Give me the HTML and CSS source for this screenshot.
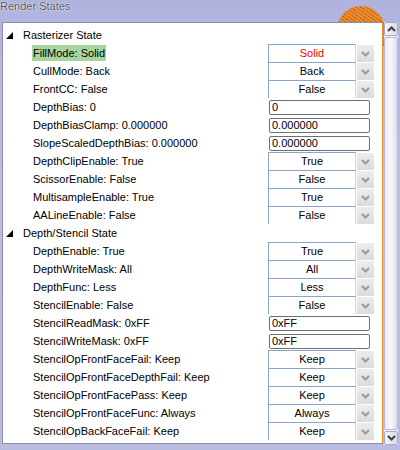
FILE: index.html
```html
<!DOCTYPE html>
<html>
<head>
<meta charset="utf-8">
<link rel="stylesheet" href="styles.css">
</head>
<body>
<div class="desk">
  <div class="blob"></div>
  <div class="title">Render States</div>
  <div class="window">
    <div class="panel">
      <div class="row section"><svg class="tri" width="8" height="8" viewBox="0 0 8 8"><polygon points="7,0 7,7 0,7" fill="#000"/></svg><span>Rasterizer State</span></div>
      <div class="row"><span class="label"><span class="sel">FillMode: Solid</span></span><div class="combo"><div class="val red">Solid</div><div class="btn"><svg width="9" height="6" viewBox="0 0 9 6"><polyline points="1,1 4.5,4.5 8,1" fill="none" stroke="#9a9a9a" stroke-width="2"/></svg></div></div></div>
      <div class="row"><span class="label">CullMode: Back</span><div class="combo"><div class="val">Back</div><div class="btn"><svg width="9" height="6" viewBox="0 0 9 6"><polyline points="1,1 4.5,4.5 8,1" fill="none" stroke="#9a9a9a" stroke-width="2"/></svg></div></div></div>
      <div class="row"><span class="label">FrontCC: False</span><div class="combo"><div class="val">False</div><div class="btn"><svg width="9" height="6" viewBox="0 0 9 6"><polyline points="1,1 4.5,4.5 8,1" fill="none" stroke="#9a9a9a" stroke-width="2"/></svg></div></div></div>
      <div class="row"><span class="label">DepthBias: 0</span><div class="input">0</div></div>
      <div class="row"><span class="label">DepthBiasClamp: 0.000000</span><div class="input">0.000000</div></div>
      <div class="row"><span class="label">SlopeScaledDepthBias: 0.000000</span><div class="input">0.000000</div></div>
      <div class="row"><span class="label">DepthClipEnable: True</span><div class="combo"><div class="val">True</div><div class="btn"><svg width="9" height="6" viewBox="0 0 9 6"><polyline points="1,1 4.5,4.5 8,1" fill="none" stroke="#9a9a9a" stroke-width="2"/></svg></div></div></div>
      <div class="row"><span class="label">ScissorEnable: False</span><div class="combo"><div class="val">False</div><div class="btn"><svg width="9" height="6" viewBox="0 0 9 6"><polyline points="1,1 4.5,4.5 8,1" fill="none" stroke="#9a9a9a" stroke-width="2"/></svg></div></div></div>
      <div class="row"><span class="label">MultisampleEnable: True</span><div class="combo"><div class="val">True</div><div class="btn"><svg width="9" height="6" viewBox="0 0 9 6"><polyline points="1,1 4.5,4.5 8,1" fill="none" stroke="#9a9a9a" stroke-width="2"/></svg></div></div></div>
      <div class="row"><span class="label">AALineEnable: False</span><div class="combo"><div class="val">False</div><div class="btn"><svg width="9" height="6" viewBox="0 0 9 6"><polyline points="1,1 4.5,4.5 8,1" fill="none" stroke="#9a9a9a" stroke-width="2"/></svg></div></div></div>
      <div class="row section"><svg class="tri" width="8" height="8" viewBox="0 0 8 8"><polygon points="7,0 7,7 0,7" fill="#000"/></svg><span>Depth/Stencil State</span></div>
      <div class="row"><span class="label">DepthEnable: True</span><div class="combo"><div class="val">True</div><div class="btn"><svg width="9" height="6" viewBox="0 0 9 6"><polyline points="1,1 4.5,4.5 8,1" fill="none" stroke="#9a9a9a" stroke-width="2"/></svg></div></div></div>
      <div class="row"><span class="label">DepthWriteMask: All</span><div class="combo"><div class="val">All</div><div class="btn"><svg width="9" height="6" viewBox="0 0 9 6"><polyline points="1,1 4.5,4.5 8,1" fill="none" stroke="#9a9a9a" stroke-width="2"/></svg></div></div></div>
      <div class="row"><span class="label">DepthFunc: Less</span><div class="combo"><div class="val">Less</div><div class="btn"><svg width="9" height="6" viewBox="0 0 9 6"><polyline points="1,1 4.5,4.5 8,1" fill="none" stroke="#9a9a9a" stroke-width="2"/></svg></div></div></div>
      <div class="row"><span class="label">StencilEnable: False</span><div class="combo"><div class="val">False</div><div class="btn"><svg width="9" height="6" viewBox="0 0 9 6"><polyline points="1,1 4.5,4.5 8,1" fill="none" stroke="#9a9a9a" stroke-width="2"/></svg></div></div></div>
      <div class="row"><span class="label">StencilReadMask: 0xFF</span><div class="input">0xFF</div></div>
      <div class="row"><span class="label">StencilWriteMask: 0xFF</span><div class="input">0xFF</div></div>
      <div class="row"><span class="label">StencilOpFrontFaceFail: Keep</span><div class="combo"><div class="val">Keep</div><div class="btn"><svg width="9" height="6" viewBox="0 0 9 6"><polyline points="1,1 4.5,4.5 8,1" fill="none" stroke="#9a9a9a" stroke-width="2"/></svg></div></div></div>
      <div class="row"><span class="label">StencilOpFrontFaceDepthFail: Keep</span><div class="combo"><div class="val">Keep</div><div class="btn"><svg width="9" height="6" viewBox="0 0 9 6"><polyline points="1,1 4.5,4.5 8,1" fill="none" stroke="#9a9a9a" stroke-width="2"/></svg></div></div></div>
      <div class="row"><span class="label">StencilOpFrontFacePass: Keep</span><div class="combo"><div class="val">Keep</div><div class="btn"><svg width="9" height="6" viewBox="0 0 9 6"><polyline points="1,1 4.5,4.5 8,1" fill="none" stroke="#9a9a9a" stroke-width="2"/></svg></div></div></div>
      <div class="row"><span class="label">StencilOpFrontFaceFunc: Always</span><div class="combo"><div class="val">Always</div><div class="btn"><svg width="9" height="6" viewBox="0 0 9 6"><polyline points="1,1 4.5,4.5 8,1" fill="none" stroke="#9a9a9a" stroke-width="2"/></svg></div></div></div>
      <div class="row"><span class="label">StencilOpBackFaceFail: Keep</span><div class="combo"><div class="val">Keep</div><div class="btn"><svg width="9" height="6" viewBox="0 0 9 6"><polyline points="1,1 4.5,4.5 8,1" fill="none" stroke="#9a9a9a" stroke-width="2"/></svg></div></div></div>
    </div>
    <div class="scroll">
      <div class="sbtn"><svg width="9" height="6" viewBox="0 0 9 6"><polyline points="1,5 4.5,1.5 8,5" fill="none" stroke="#404040" stroke-width="2"/></svg></div>
      <div class="thumb"></div>
      <div class="sbtn"><svg width="9" height="6" viewBox="0 0 9 6"><polyline points="1,1 4.5,4.5 8,1" fill="none" stroke="#404040" stroke-width="2"/></svg></div>
    </div>
  </div>
</div>
</body>
</html>
```
FILE: styles.css
```css
html, body {
  margin: 0;
  padding: 0;
}
body {
  width: 400px;
  height: 450px;
  overflow: hidden;
  background: #b9bbe1;
  font-family: "Liberation Sans", Arial, sans-serif;
  font-size: 11px;
  color: #000;
}
.desk {
  position: relative;
  width: 400px;
  height: 450px;
  background: linear-gradient(#b0b3de, #bcbee3 40%, #b9bbe1);
}
.blob {
  position: absolute;
  left: 337px;
  top: 6px;
  width: 48px;
  height: 40px;
  border-radius: 24px 24px 0 0;
  background:
    repeating-linear-gradient(35deg, rgba(80,60,140,0.35) 0 1px, transparent 1px 3px),
    #f28a1e;
}
.title {
  position: relative;
  height: 22px;
  line-height: 12px;
  padding-top: 0;
  color: #4c5060;
  text-shadow: 0 0 1px #fff, 0 0 2px #fff;
  font-size: 11px;
  box-sizing: border-box;
}
.window {
  position: relative;
  display: flex;
  margin-left: 2px;
}
.panel {
  width: 381px;
  background: #fff;
  border-top: 1px solid #8c8ea6;
  border-left: 1px solid #8c8ea6;
  border-bottom: 1px solid #8c8ea6;
  border-right: 1px solid #f0902a;
  padding-top: 3px;
  box-sizing: border-box;
  height: 422px;
  overflow: hidden;
}
.row {
  display: grid;
  grid-template-columns: 265px auto;
  align-items: center;
  height: 18px;
}
.row.section {
  display: flex;
  align-items: center;
}
.tri {
  margin-left: 3px;
  margin-right: 9px;
  margin-top: 1px;
}
.label {
  padding-left: 30px;
  white-space: nowrap;
}
.sel {
  background: #a7d59d;
  padding: 2px 1px 2px 1px;
  margin-left: -1px;
}
.combo {
  display: flex;
  height: 18px;
}
.val {
  width: 86px;
  height: 17px;
  border-top: 1px solid #8aa6c6;
  border-left: 1px solid #8aa6c6;
  border-right: 1px solid #c8d4e4;
  text-align: center;
  line-height: 17px;
}
.val.red {
  color: #ee0000;
}
.btn {
  width: 17px;
  height: 17px;
  margin-left: 1px;
  margin-top: 1px;
  background: linear-gradient(#ececec, #dcdcdc);
  display: flex;
  align-items: center;
  justify-content: center;
}
.input {
  height: 13px;
  margin-left: 1px;
  border: 1px solid #707070;
  border-radius: 2px;
  padding-left: 2px;
  line-height: 13px;
  box-sizing: content-box;
  width: 97px;
}
.scroll {
  width: 14px;
  height: 423px;
  margin-left: 1px;
  display: flex;
  flex-direction: column;
  background: #f0f0f8;
}
.sbtn {
  width: 14px;
  height: 14px;
  box-sizing: border-box;
  border: 1px solid #a8aacc;
  border-radius: 2px;
  background: linear-gradient(90deg, #f4f4fa, #dcdce8);
  display: flex;
  align-items: center;
  justify-content: center;
}
.thumb {
  flex: 1;
  margin: 1px 0;
  border: 1px solid #b8bad4;
  border-radius: 2px;
  background: linear-gradient(90deg, #eaeaf4, #f8f8fc 50%, #dcdcea);
}
```
